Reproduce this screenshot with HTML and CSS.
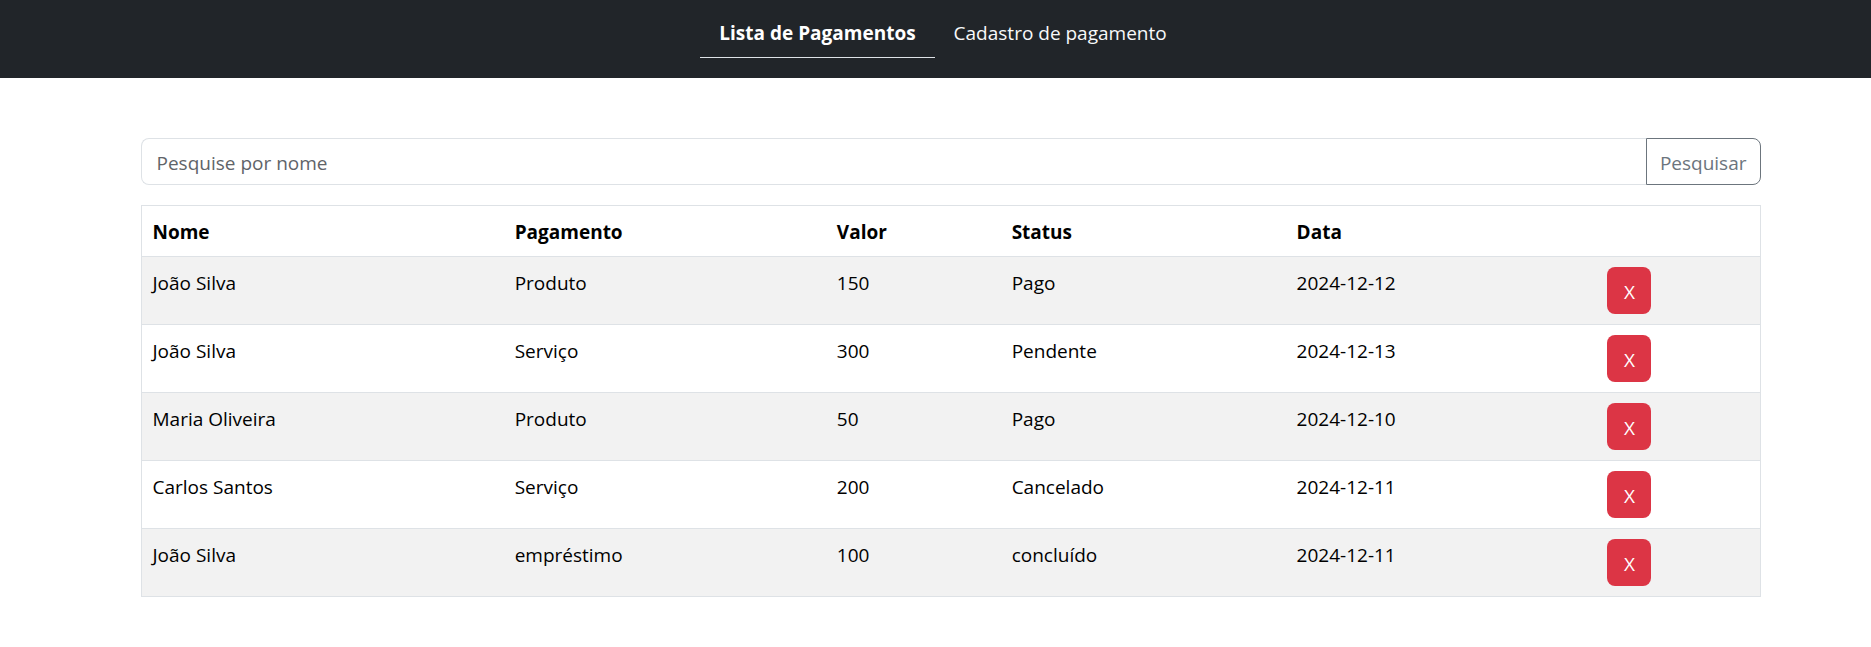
FILE: index.html
```
<!DOCTYPE html>
<html lang="pt-BR">
<head>
  <meta charset="utf-8">
  <meta name="viewport" content="width=device-width, initial-scale=1">
  <title>Lista de Pagamentos</title>
  <link rel="stylesheet" href="styles.css">
</head>
<body>
  <nav class="navbar">
    <a class="nav-link active" href="#lista" aria-current="page">Lista de Pagamentos</a>
    <a class="nav-link" href="#cadastro">Cadastro de pagamento</a>
  </nav>
  <main class="container">
    <form class="search">
      <input class="search-input" type="text" placeholder="Pesquise por nome" aria-label="Pesquise por nome">
      <button class="search-button" type="button">Pesquisar</button>
    </form>
    <table class="payments">
      <colgroup>
        <col class="col-name"><col class="col-payment"><col class="col-value"><col class="col-status"><col class="col-date"><col>
      </colgroup>
      <thead>
        <tr><th scope="col">Nome</th><th scope="col">Pagamento</th><th scope="col">Valor</th><th scope="col">Status</th><th scope="col">Data</th><td></td></tr>
      </thead>
      <tbody>
        <tr><td>João Silva</td><td>Produto</td><td>150</td><td>Pago</td><td>2024-12-12</td><td class="action"><button class="delete" type="button">X</button></td></tr>
        <tr><td>João Silva</td><td>Serviço</td><td>300</td><td>Pendente</td><td>2024-12-13</td><td class="action"><button class="delete" type="button">X</button></td></tr>
        <tr><td>Maria Oliveira</td><td>Produto</td><td>50</td><td>Pago</td><td>2024-12-10</td><td class="action"><button class="delete" type="button">X</button></td></tr>
        <tr><td>Carlos Santos</td><td>Serviço</td><td>200</td><td>Cancelado</td><td>2024-12-11</td><td class="action"><button class="delete" type="button">X</button></td></tr>
        <tr><td>João Silva</td><td>empréstimo</td><td>100</td><td>concluído</td><td>2024-12-11</td><td class="action"><button class="delete" type="button">X</button></td></tr>
      </tbody>
    </table>
  </main>
</body>
</html>
```

FILE: styles.css
```
* {
  box-sizing: border-box;
}

body {
  margin: 0;
  background: #fff;
  color: #000;
  font-family: "Segoe UI", "Open Sans", "Noto Sans", sans-serif;
  font-size: 19px;
  line-height: 30px;
}

input,
button {
  font: inherit;
}

.navbar {
  display: flex;
  justify-content: center;
  padding: 8px 0 20px;
  background: #212529;
}

.nav-link {
  padding: 10px 4px 9px 19px;
  border-bottom: 1px solid transparent;
  color: #f8f9fa;
  text-decoration: none;
}

.nav-link.active {
  padding-right: 19px;
  border-bottom-color: #dee2e6;
  color: #fff;
  font-weight: 700;
}

.container {
  max-width: 1650px;
  margin: 0 auto;
  padding: 60px 0 0 30px;
}

.search {
  display: flex;
  margin-bottom: 20px;
}

.search-input {
  flex: 1;
  min-width: 0;
  height: 47px;
  padding: 8px 15px 6px;
  border: 1px solid #dee2e6;
  border-right: 0;
  border-radius: 8px 0 0 8px;
  background: #fff;
  color: #212529;
}

.search-input::placeholder {
  color: #5f6469;
  opacity: 1;
}

.search-button {
  height: 47px;
  padding: 8px 13px 6px;
  border: 1px solid #6c757d;
  border-radius: 0 8px 8px 0;
  background: #fff;
  color: #6c757d;
}

.payments {
  width: 100%;
  table-layout: fixed;
  border-collapse: collapse;
  border: 1px solid #dee2e6;
}

.payments tr {
  border-bottom: 1px solid #dee2e6;
}

.payments th,
.payments td {
  padding: 11px 10px 9px 11px;
  text-align: left;
  vertical-align: top;
}

.payments .action {
  padding: 10px 10px 10px 11px;
}

.payments tbody tr:nth-child(odd) {
  background: #f2f2f2;
}

.col-name {
  width: 22.4%;
}

.col-payment {
  width: 19.9%;
}

.col-value {
  width: 10.8%;
}

.col-status {
  width: 17.6%;
}

.col-date {
  width: 19.2%;
}

.delete {
  display: block;
  width: 44px;
  height: 47px;
  padding: 2px 0 0;
  border: 0;
  border-radius: 8px;
  background: #dc3545;
  color: #fff;
}
```
